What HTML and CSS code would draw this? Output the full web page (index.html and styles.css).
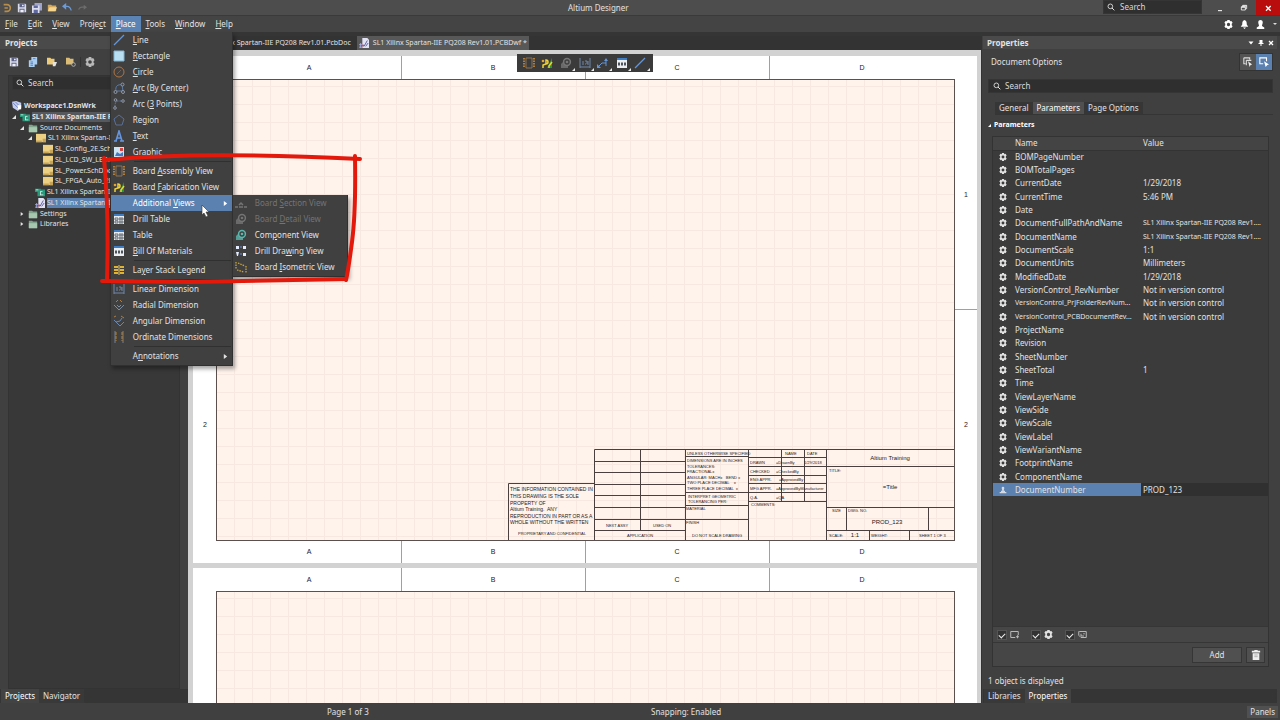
FILE: index.html
```html
<!DOCTYPE html>
<html lang="en">

<head>
    <meta charset="UTF-8">
    <meta name="viewport" content="width=device-width, initial-scale=1.0">
    <title>Altium Designer</title>
    <link rel="stylesheet" href="styles.css">
</head>

<body>
    <!-- shared icons -->
    <svg class="icon_defs" aria-hidden="true">
        <symbol id="i_gear" viewBox="0 0 12 12">
            <path fill="currentColor" fill-rule="evenodd" d="M4.5 0h3L8 1.8l1.8-.5 1.7 2.5L10.3 5v2l1.2 1.2-1.7 2.5-1.8-.5-.5 1.8h-3L4 10.2l-1.8.5L.5 8.2 1.7 7V5L.5 3.8l1.7-2.5 1.8.5zM6 3.8a2.2 2.2 0 1 0 0 4.4a2.2 2.2 0 1 0 0-4.4z" />
        </symbol>
        <symbol id="i_search" viewBox="0 0 12 12">
            <circle cx="5" cy="5" r="3.5" fill="none" stroke="currentColor" stroke-width="1.3" />
            <path d="M7.5 7.5L11 11" stroke="currentColor" stroke-width="1.5" />
        </symbol>
        <symbol id="i_save" viewBox="0 0 12 12">
            <path fill="#d9dbe8" d="M1 1h9l1 1v9H1z" />
            <path fill="#5c6186" d="M3 1h6v4H3zM3 7h6v4H3z" />
            <path fill="#eeeef6" d="M4 8h4v3H4zM6 2h2v2H6z" />
        </symbol>
        <symbol id="i_folder" viewBox="0 0 12 12">
            <path fill="#d3a85b" d="M1 2h4l1 1h5v7H1z" />
            <path fill="#f5d58e" d="M1 10l2-5h9l-2 5z" />
        </symbol>
        <symbol id="i_group" viewBox="0 0 12 12">
            <path fill="#7ea58b" d="M1 2h4l1 1h5v8H1z" />
            <path fill="#a5c8ae" d="M1 5h10v6H1z" />
        </symbol>
        <symbol id="i_sch" viewBox="0 0 12 12">
            <path fill="#edd083" d="M0 1h12v10H0z" />
            <path fill="#c7a457" d="M0 9h7v2H0zM8 7h4v4H8z" />
        </symbol>
        <symbol id="i_pcb" viewBox="0 0 12 12">
            <path fill="#2b9a7c" d="M0 2h7v4H0zM3 3h9v8H3z" />
            <path fill="#d9f5eb" d="M6 5h3v1H7v3h3v1H6zM1 3h3v1H1z" />
        </symbol>
        <symbol id="i_dwf" viewBox="0 0 12 12">
            <path fill="#e3e3f5" d="M4 0h6l2 2v10H4z" />
            <path d="M6 10l4-7M8 10l3-4" stroke="#62639c" stroke-width="1.2" />
            <path d="M0 8h4M0 11h4M2 6v6" stroke="#a7b3ef" />
            <path fill="#c34f6e" d="M3 8h3v2H3z" />
        </symbol>
        <symbol id="i_work" viewBox="0 0 12 12">
            <path fill="#c3cdf0" d="M0 1l5-1 6 2v6l-4 4-6-4z" />
            <path d="M1 2l8 8M4 1l6 6" stroke="#6375b6" />
            <path fill="#fff" d="M7 5h4v5H7z" />
        </symbol>
        <symbol id="i_table" viewBox="0 0 12 12">
            <path fill="#e8ebef" d="M1 1h10v10H1z" />
            <path fill="#3e7cc4" d="M1 1h10v2H1z" />
            <path d="M2 5h3v2H2zM2 8h3v2H2zM7 4v7M9 4v7M6 6h5M6 9h5" fill="none" stroke="#49505b" stroke-width=".8" />
        </symbol>
        <symbol id="i_bom" viewBox="0 0 12 12">
            <path fill="#eceff2" d="M1 1h10v10H1z" />
            <path fill="#3e7cc4" d="M1 1h10v2H1z" />
            <path d="M2 7h8" stroke="#4c535d" stroke-width="3" stroke-dasharray="2 1" />
        </symbol>
        <symbol id="i_assembly" viewBox="0 0 12 12">
            <path d="M3 1h6M3 11h6M3 1v10M9 1v10" fill="none" stroke="#8e7252" />
            <path d="M1 1v10M11 1v10" stroke="#d89038" stroke-width="1.5" stroke-dasharray="1.5 1" />
        </symbol>
        <symbol id="i_fab" viewBox="0 0 12 12">
            <path fill="#24972e" d="M6 11h5V1z" />
            <path d="M2 11V8l3-1V3a2 2 0 1 1 0 4M8 11V9l3-4" fill="none" stroke="#f1d137" stroke-width="1.5" />
            <circle cx="2" cy="4" r="1.3" fill="#e4a52d" />
        </symbol>
        <symbol id="i_line" viewBox="0 0 12 12">
            <path d="M1 11L11 1" stroke="#6496d7" stroke-width="1.3" />
        </symbol>
        <symbol id="i_detail" viewBox="0 0 12 12">
            <path fill="currentColor" d="M1 7l4-4 3 3v5H1z" opacity=".8" />
            <circle cx="7" cy="5" r="3.4" fill="#404040" stroke="currentColor" stroke-width="1.5" />
            <circle cx="7" cy="5" r="1.3" fill="currentColor" />
        </symbol>
        <symbol id="i_linear" viewBox="0 0 12 12">
            <path d="M1 1v10M11 1v10M1 10h10M4 4v4M6 7h1M6 4h2v3M9 4v4" fill="none" stroke="#7186a8" />
        </symbol>
        <symbol id="i_arrow" viewBox="0 0 6 6">
            <path fill="currentColor" d="M1 0l4 3-4 3z" />
        </symbol>
        <symbol id="i_open" viewBox="0 0 6 6">
            <path fill="currentColor" d="M6 0v6H0z" />
        </symbol>
    </svg>

    <header class="title_bar">
        <div class="quick_tools">
            <button aria-label="Altium"><svg viewBox="0 0 12 12"><path d="M2 2h4a4 4 0 0 1 0 8H3M3 6h4" fill="none" stroke="#b78d4b" stroke-width="2" /></svg></button>
            <button aria-label="Save"><svg><use href="#i_save" /></svg></button>
            <button aria-label="Save all"><svg viewBox="0 0 12 12"><path fill="#9ea4cb" d="M3 0h9v9H3z" /><path fill="#dcdef0" d="M0 3h9v9H0z" /><path fill="#6068a0" d="M2 3h5v3H2zM2 8h5v4H2z" /></svg></button>
            <button aria-label="Open"><svg><use href="#i_folder" /></svg></button>
            <button aria-label="Undo"><svg viewBox="0 0 12 12"><path d="M2 4h4q4 0 5 5" fill="none" stroke="#6e9bd5" stroke-width="1.5" /><path fill="#6e9bd5" d="M0 4l5-4v8z" /></svg></button>
            <button aria-label="Redo"><svg viewBox="0 0 12 12"><path d="M10 5H6q-3 0-4 3" fill="none" stroke="#6c6c6c" stroke-width="1.5" /><path fill="#6c6c6c" d="M12 5L8 2v6z" /></svg></button>
        </div>
        <h1 class="app_title">Altium Designer</h1>
        <div class="title_right">
            <label class="search title_search"><svg><use href="#i_search" /></svg><input type="text" placeholder="Search" aria-label="Search"></label>
            <div class="window_buttons">
                <button aria-label="Minimize"><svg viewBox="0 0 12 12"><path d="M3 10h6" stroke="#fff" stroke-width="1.5" /></svg></button>
                <button aria-label="Restore"><svg viewBox="0 0 12 12"><path d="M4 4V2h6v5H8M2 4h6v5H2zM2 5h6M4 3h6" fill="none" stroke="#fff" stroke-width="1.2" /></svg></button>
                <button class="close" aria-label="Close"><svg viewBox="0 0 12 12"><path d="M3 3l7 7M10 3l-7 7" stroke="#fff" stroke-width="2" /></svg></button>
            </div>
        </div>
    </header>

    <nav class="menu_bar">
        <button><u>F</u>ile</button>
        <button><u>E</u>dit</button>
        <button><u>V</u>iew</button>
        <button>Proje<u>c</u>t</button>
        <div class="menu_holder">
            <button class="open"><u>P</u>lace</button>
            <div class="menu">
                <button><svg><use href="#i_line" /></svg><span><u>L</u>ine</span></button>
                <button><svg viewBox="0 0 12 12"><path fill="#b9e0f2" stroke="#84b5d5" d="M1 1h10v10H1z" /></svg><span><u>R</u>ectangle</span></button>
                <button><svg viewBox="0 0 12 12"><circle cx="6" cy="6" r="5" fill="none" stroke="#b17544" /><path d="M4 8l4-4" stroke="#6c6259" /></svg><span><u>C</u>ircle</span></button>
                <button><svg viewBox="0 0 12 12"><path d="M3 9c-1-5 2-7 6-6l1 6H4" fill="none" stroke="#5d7ca8" /><g fill="#404040" stroke="#a0aabb" stroke-width=".8"><circle cx="2.5" cy="10" r="1.5" /><circle cx="10" cy="10" r="1.5" /><circle cx="9.5" cy="2.5" r="1.5" /></g></svg><span><u>A</u>rc (By Center)</span></button>
                <button><svg viewBox="0 0 12 12"><path d="M2 9c0-3 0-4 2-6h5" fill="none" stroke="#5d7ca8" stroke-dasharray="2 1" /><g fill="#404040" stroke="#a0aabb" stroke-width=".8"><circle cx="2" cy="10" r="1.3" /><circle cx="2.5" cy="2" r="1.3" /><circle cx="10" cy="3" r="1.3" /></g></svg><span>Arc (<u>3</u> Points)</span></button>
                <button><svg viewBox="0 0 12 12"><path d="M6 1l5 4-2 6H3L1 5z" fill="none" stroke="#596f99" /></svg><span>Re<u>g</u>ion</span></button>
                <button><svg viewBox="0 0 12 12"><path d="M1 11h3M7 11h4M3 11L6 1l3 10M4 8h4" fill="none" stroke="#6695df" stroke-width="1.6" /></svg><span><u>T</u>ext</span></button>
                <button><svg viewBox="0 0 12 12"><path fill="#cce4f3" d="M1 1h10v10H1z" /><path fill="#4478c2" d="M2 10l2-4 3 2 3-2v4z" /><path fill="#d34343" d="M7 2h3v3H7z" /></svg><span><u>G</u>raphic</span></button>
                <hr>
                <button><svg><use href="#i_assembly" /></svg><span>Board <u>A</u>ssembly View</span></button>
                <button><svg><use href="#i_fab" /></svg><span>Board <u>F</u>abrication View</span></button>
                <div class="menu_holder">
                    <button class="hover"><svg></svg><span>Additional <u>V</u>iews</span><svg class="more"><use href="#i_arrow" /></svg></button>
                    <div class="menu sub_menu">
                        <button disabled><svg viewBox="0 0 12 12"><path d="M0 10h3M4 10h4M9 10h3M4 8l2-2 2 2" fill="none" stroke="currentColor" stroke-width="1.5" /></svg><span>Board <u>S</u>ection View</span></button>
                        <button disabled><svg><use href="#i_detail" /></svg><span>Board <u>D</u>etail View</span></button>
                        <button><svg class="teal"><use href="#i_detail" /></svg><span>Com<u>p</u>onent View</span></button>
                        <button><svg viewBox="0 0 12 12"><path fill="#e5edff" d="M1 1h3v3H1zM8 1h3v3H8zM1 7h3l-1 4H2zM8 8h3v3H8z" /><path d="M5 2h2M5 9h2" stroke="#6c8edc" /></svg><span>Drill Dra<u>w</u>ing View</span></button>
                        <button><svg viewBox="0 0 12 12"><path d="M1 1v7M3 2l7 3M11 5v7M2 9l7 2" fill="none" stroke="#c7a63c" stroke-width="1.3" stroke-dasharray="1.5 1" /></svg><span>Board <u>I</u>sometric View</span></button>
                    </div>
                </div>
                <button><svg><use href="#i_table" /></svg><span>Drill Table</span></button>
                <button><svg><use href="#i_table" /></svg><span>Table</span></button>
                <button><svg><use href="#i_bom" /></svg><span><u>B</u>ill Of Materials</span></button>
                <hr>
                <button><svg viewBox="0 0 12 12"><path d="M1 3h4M7 3h4M1 6h4M7 6h4M1 9h4M7 9h4" stroke="#dfb435" stroke-width="2" /><path d="M6 1v10" stroke="#e5ca73" /></svg><span>La<u>y</u>er Stack Legend</span></button>
                <hr>
                <button><svg><use href="#i_linear" /></svg><span>Linear Dimension</span></button>
                <button><svg viewBox="0 0 12 12"><path d="M1 6l5 5 5-5M4 6l2 2 2-2" fill="none" stroke="#7a8ca2" /><path d="M3 3l2-2M9 3L7 1" stroke="#b27e45" /></svg><span>Radial Dimension</span></button>
                <button><svg viewBox="0 0 12 12"><path d="M1 5l6 6 4-4M3 7q5 0 6-4" fill="none" stroke="#6c88af" /><path d="M1 2l2-1M8 1l3 2" stroke="#b27e45" /></svg><span>Angular Dimension</span></button>
                <button><svg viewBox="0 0 12 12"><path d="M2 0v12M10 0v12" stroke="#728198" /><path d="M3 1v9M9 1v9" stroke="#b88437" stroke-dasharray="3 1" /></svg><span>Ordinate Dimensions</span></button>
                <hr>
                <button><svg></svg><span>A<u>n</u>notations</span><svg class="more"><use href="#i_arrow" /></svg></button>
            </div>
        </div>
        <button><u>T</u>ools</button>
        <button><u>W</u>indow</button>
        <button><u>H</u>elp</button>
        <div class="user_tools">
            <button aria-label="Settings"><svg><use href="#i_gear" /></svg></button>
            <button aria-label="Notifications"><svg viewBox="0 0 12 12"><path fill="#fff" d="M6 0c3 1 3 3 3 6l2 3H1l2-3c0-3 0-5 3-6zM4 10h4l-2 2z" /></svg></button>
            <button aria-label="Account"><svg viewBox="0 0 12 12"><path fill="#fff" d="M3 3c0-4 6-4 6 0 0 2-1 3-1 5l3 2v2H1v-2l3-2c0-2-1-3-1-5z" /></svg></button>
            <svg class="tiny" viewBox="0 0 6 6"><path fill="#ddd" d="M1 2h4L3 4z" /></svg>
        </div>
    </nav>

    <main class="workspace">
        <aside class="projects">
            <h2 class="panel_title">Projects</h2>
            <div class="panel_tools">
                <button aria-label="Save"><svg><use href="#i_save" /></svg></button>
                <button aria-label="Compile"><svg viewBox="0 0 12 12"><path fill="#a9cdf1" d="M4 0h7v9H4zM1 4h7v8H1z" /><path d="M3 6h3M3 8h3M3 10h3M6 2h3" stroke="#4e75b3" /></svg></button>
                <button aria-label="Open project"><svg viewBox="0 0 12 12"><path fill="#edcb7d" d="M0 1h4l1 1h4v7H0z" /><path fill="#e3e3e3" d="M7 6h5l-2 5H7z" /></svg></button>
                <button aria-label="Project options"><svg viewBox="0 0 12 12"><path fill="#dabc76" d="M0 1h4l1 1h4v7H0z" /><circle cx="9" cy="9" r="2.2" fill="#444" stroke="#bbb" /></svg></button>
                <i></i>
                <button class="dim" aria-label="Settings"><svg><use href="#i_gear" /></svg></button>
            </div>
            <div class="projects_body">
                <label class="search"><svg><use href="#i_search" /></svg><input type="text" placeholder="Search" aria-label="Search projects"></label>
                <ul class="tree">
                    <li class="strong"><svg><use href="#i_work" /></svg>Workspace1.DsnWrk</li>
                    <li class="strong selected_soft"><svg class="twist"><use href="#i_open" /></svg><svg><use href="#i_pcb" /></svg><span>SL1 Xilinx Spartan-IIE PQ208 Rev1.01.PrjPcb</span></li>
                    <li class="level_2"><svg class="twist"><use href="#i_open" /></svg><svg><use href="#i_group" /></svg>Source Documents</li>
                    <li class="level_3"><svg class="twist"><use href="#i_open" /></svg><svg><use href="#i_sch" /></svg>SL1 Xilinx Spartan-IIE PQ208 Rev1.01.SchDoc</li>
                    <li class="level_4"><svg><use href="#i_sch" /></svg>SL_Config_2E.SchDoc</li>
                    <li class="level_4"><svg><use href="#i_sch" /></svg>SL_LCD_SW_LED.SchDoc</li>
                    <li class="level_4"><svg><use href="#i_sch" /></svg>SL_Power.SchDoc</li>
                    <li class="level_4"><svg><use href="#i_sch" /></svg>SL_FPGA_Auto_2E.SchDoc</li>
                    <li class="level_doc"><svg><use href="#i_pcb" /></svg>SL1 Xilinx Spartan-IIE PQ208 Rev1.01.PcbDoc</li>
                    <li class="level_doc selected"><svg><use href="#i_dwf" /></svg><span>SL1 Xilinx Spartan-IIE PQ208 Rev1.01.PCBDwf</span></li>
                    <li class="level_2"><svg class="twist"><use href="#i_arrow" /></svg><svg><use href="#i_group" /></svg>Settings</li>
                    <li class="level_2"><svg class="twist"><use href="#i_arrow" /></svg><svg><use href="#i_group" /></svg>Libraries</li>
                </ul>
            </div>
            <div class="panel_tabs">
                <button class="active">Projects</button>
                <button>Navigator</button>
            </div>
        </aside>

        <section class="editor">
            <div class="doc_tabs">
                <button><svg><use href="#i_pcb" /></svg>SL1 Xilinx Spartan-IIE PQ208 Rev1.01.PcbDoc</button>
                <button class="active"><svg><use href="#i_dwf" /></svg>SL1 Xilinx Spartan-IIE PQ208 Rev1.01.PCBDwf *</button>
            </div>
            <div class="canvas">
                <div class="active_bar">
                    <button aria-label="Board assembly view"><svg><use href="#i_assembly" /></svg></button>
                    <button aria-label="Board fabrication view"><svg><use href="#i_fab" /></svg></button>
                    <button class="drop" aria-label="Additional views"><svg><use href="#i_detail" /></svg></button>
                    <button class="drop" aria-label="Dimensions"><svg><use href="#i_linear" /></svg></button>
                    <button class="drop" aria-label="Annotations"><svg viewBox="0 0 12 12"><path d="M1 10l4-4h4M9 3v6" fill="none" stroke="#6496d7" /><path fill="#6496d7" d="M0 11V7l4 4zM9 1l2 3H7z" /></svg></button>
                    <button class="drop" aria-label="Bill of materials"><svg><use href="#i_bom" /></svg></button>
                    <button class="drop" aria-label="Line"><svg><use href="#i_line" /></svg></button>
                </div>

                <svg class="sheet" viewBox="0 0 784 507">
                    <defs>
                        <pattern id="grid" width="18" height="18" patternUnits="userSpaceOnUse" x="5" y="12">
                            <path d="M0 .5h18M.5 0v18" stroke="#f7e9e2" />
                        </pattern>
                        <g id="zones">
                            <rect width="784" height="507" fill="#fff" />
                            <rect x="23.5" y="23.5" width="738" height="461" fill="#fff3ec" />
                            <rect x="23.5" y="23.5" width="738" height="461" fill="url(#grid)" stroke="#5b504e" />
                            <path d="M208.5 0v23M392.5 0v23M576.5 0v23M208.5 485v22M392.5 485v22M576.5 485v22M0 253.5h23M762 253.5h22" stroke="#a0a0a0" />
                            <g class="zone_text">
                                <text x="116" y="14">A</text><text x="300" y="14">B</text><text x="484" y="14">C</text><text x="669" y="14">D</text>
                            </g>
                        </g>
                    </defs>
                    <use href="#zones" />
                    <g class="zone_text">
                        <text x="116" y="498">A</text><text x="300" y="498">B</text><text x="484" y="498">C</text><text x="669" y="498">D</text>
                        <text x="12" y="141">1</text><text x="773" y="141">1</text>
                        <text x="12" y="371">2</text><text x="773" y="371">2</text>
                    </g>
                    <!-- title block -->
                    <g transform="translate(-193 -56)">
                        <g fill="none" stroke="#4a4040">
                            <path d="M508.5 540V483.5H594M594.5 540V449.5H954M640.5 449v81M685.5 449v91M594 461.5h91M594 472.5h91M594 484.5h91M594 495.5h91M594 507.5h91M594 519.5h91M594 530.5h91" />
                            <path d="M748.5 449v91M686 456.5h62M686 492.5h62M686 505.5h62M686 519.5h62" />
                            <path d="M826.5 449v91M781.5 449v53M804.5 449v53M749 457.5h78M749 466.5h78M749 475.5h78M749 483.5h78M749 492.5h78M749 501.5h78" />
                            <path d="M827 466.5h127M827 507.5h127M827 530.5h127M846.5 507v23M928.5 507v23M869.5 530v10M909.5 530v10" />
                        </g>
                        <g class="note_text">
                            <text x="510" y="491">THE INFORMATION CONTAINED IN</text>
                            <text x="510" y="498">THIS DRAWING IS THE SOLE</text>
                            <text x="510" y="505">PROPERTY OF</text>
                            <text x="510" y="511">Altium Training.  ANY</text>
                            <text x="510" y="518">REPRODUCTION IN PART OR AS A</text>
                            <text x="510" y="524">WHOLE WITHOUT THE WRITTEN</text>
                        </g>
                        <g class="small_text">
                            <text x="518" y="535">PROPRIETARY AND CONFIDENTIAL</text>
                            <text x="606" y="527">NEXT ASSY</text><text x="653" y="527">USED ON</text><text x="627" y="537">APPLICATION</text>
                            <text x="687" y="455">UNLESS OTHERWISE SPECIFIED</text>
                            <text x="687" y="462">DIMENSIONS ARE IN INCHES</text>
                            <text x="687" y="468">TOLERANCES:</text>
                            <text x="687" y="473">FRACTIONAL±</text>
                            <text x="687" y="479">ANGULAR: MACH±   BEND ±</text>
                            <text x="687" y="484">TWO PLACE DECIMAL    ±</text>
                            <text x="687" y="490">THREE PLACE DECIMAL  ±</text>
                            <text x="688" y="498">INTERPRET GEOMETRIC</text><text x="688" y="503">TOLERANCING PER:</text>
                            <text x="686" y="510">MATERIAL</text><text x="686" y="524">FINISH</text>
                            <text x="692" y="537">DO NOT SCALE DRAWING</text>
                            <text x="785" y="455">NAME</text><text x="807" y="455">DATE</text>
                            <text x="750" y="464">DRAWN</text><text x="776" y="464">=DrawnBy</text><text x="804" y="464">1/29/2018</text>
                            <text x="750" y="473">CHECKED</text><text x="776" y="473">=CheckedBy</text>
                            <text x="750" y="481">ENG APPR.</text><text x="779" y="481">=ApprovedBy</text>
                            <text x="750" y="490">MFG APPR.</text><text x="776" y="490">=ApprovedByManufacturer</text>
                            <text x="750" y="499">Q.A.</text><text x="776" y="499">=QA</text>
                            <text x="751" y="506">COMMENTS:</text>
                            <text x="829" y="472">TITLE:</text><text x="832" y="512">SIZE</text><text x="848" y="512">DWG. NO.</text>
                            <text x="829" y="537">SCALE:</text><text x="871" y="537">WEIGHT:</text><text x="919" y="537">SHEET 1 OF 3</text>
                        </g>
                        <g class="block_text">
                            <text x="890" y="460">Altium Training</text>
                            <text x="890" y="489">=Title</text>
                            <text x="887" y="524">PROD_123</text>
                            <text x="855" y="537">1:1</text>
                        </g>
                    </g>
                </svg>
                <svg class="sheet" viewBox="0 0 784 507">
                    <use href="#zones" />
                </svg>
            </div>
        </section>

        <aside class="properties">
            <div class="panel_title">
                <h2>Properties</h2>
                <button aria-label="Panel menu"><svg viewBox="0 0 12 12"><path fill="#fff" d="M1 3h10L6 9z" /></svg></button>
                <button aria-label="Pin"><svg viewBox="0 0 12 12"><path fill="#fff" d="M3 0h6v6h2v2H1V6h2zM5 8h2v4H5z" /></svg></button>
                <button aria-label="Close panel"><svg viewBox="0 0 12 12"><path d="M2 2l8 8M10 2l-8 8" stroke="#fff" stroke-width="2.5" /></svg></button>
            </div>
            <div class="properties_body">
                <div class="object_row">
                    <span>Document Options</span>
                    <div class="mode_buttons">
                        <button aria-label="Select all"><svg viewBox="0 0 12 12"><path d="M1 1h7v2M1 1v7h2M4 4h6M4 4v6" fill="none" stroke="#ddd" stroke-width="1.3" /><path fill="#eee" d="M6 5l5 4-2 .5L8 12z" /></svg></button>
                        <button class="on" aria-label="Select single"><svg viewBox="0 0 12 12"><path d="M5 8H1V1h8v4" fill="none" stroke="#fff" stroke-width="1.3" /><path fill="#fff" d="M6 5l6 4-2 .5L8 12z" /></svg></button>
                    </div>
                </div>
                <label class="search"><svg><use href="#i_search" /></svg><input type="text" placeholder="Search" aria-label="Search properties"></label>
                <div class="prop_tabs">
                    <button>General</button>
                    <button class="active">Parameters</button>
                    <button>Page Options</button>
                </div>
                <h3 class="section_title"><svg><use href="#i_open" /></svg>Parameters</h3>
                <div class="param_box">
                    <div class="param_scroll">
                        <table class="params">
                            <thead>
                                <tr><th></th><th>Name</th><th>Value</th></tr>
                            </thead>
                            <tbody>
                                <tr><td><svg><use href="#i_gear" /></svg></td><td>BOMPageNumber</td><td></td></tr>
                                <tr><td><svg><use href="#i_gear" /></svg></td><td>BOMTotalPages</td><td></td></tr>
                                <tr><td><svg><use href="#i_gear" /></svg></td><td>CurrentDate</td><td>1/29/2018</td></tr>
                                <tr><td><svg><use href="#i_gear" /></svg></td><td>CurrentTime</td><td>5:46 PM</td></tr>
                                <tr><td><svg><use href="#i_gear" /></svg></td><td>Date</td><td></td></tr>
                                <tr><td><svg><use href="#i_gear" /></svg></td><td>DocumentFullPathAndName</td><td class="long">SL1 Xilinx Spartan-IIE PQ208 Rev1....</td></tr>
                                <tr><td><svg><use href="#i_gear" /></svg></td><td>DocumentName</td><td class="long">SL1 Xilinx Spartan-IIE PQ208 Rev1....</td></tr>
                                <tr><td><svg><use href="#i_gear" /></svg></td><td>DocumentScale</td><td>1:1</td></tr>
                                <tr><td><svg><use href="#i_gear" /></svg></td><td>DocumentUnits</td><td>Millimeters</td></tr>
                                <tr><td><svg><use href="#i_gear" /></svg></td><td>ModifiedDate</td><td>1/29/2018</td></tr>
                                <tr><td><svg><use href="#i_gear" /></svg></td><td>VersionControl_RevNumber</td><td>Not in version control</td></tr>
                                <tr><td><svg><use href="#i_gear" /></svg></td><td class="long">VersionControl_PrjFolderRevNum...</td><td>Not in version control</td></tr>
                                <tr><td><svg><use href="#i_gear" /></svg></td><td class="long">VersionControl_PCBDocumentRev...</td><td>Not in version control</td></tr>
                                <tr><td><svg><use href="#i_gear" /></svg></td><td>ProjectName</td><td></td></tr>
                                <tr><td><svg><use href="#i_gear" /></svg></td><td>Revision</td><td></td></tr>
                                <tr><td><svg><use href="#i_gear" /></svg></td><td>SheetNumber</td><td></td></tr>
                                <tr><td><svg><use href="#i_gear" /></svg></td><td>SheetTotal</td><td>1</td></tr>
                                <tr><td><svg><use href="#i_gear" /></svg></td><td>Time</td><td></td></tr>
                                <tr><td><svg><use href="#i_gear" /></svg></td><td>ViewLayerName</td><td></td></tr>
                                <tr><td><svg><use href="#i_gear" /></svg></td><td>ViewSide</td><td></td></tr>
                                <tr><td><svg><use href="#i_gear" /></svg></td><td>ViewScale</td><td></td></tr>
                                <tr><td><svg><use href="#i_gear" /></svg></td><td>ViewLabel</td><td></td></tr>
                                <tr><td><svg><use href="#i_gear" /></svg></td><td>ViewVariantName</td><td></td></tr>
                                <tr><td><svg><use href="#i_gear" /></svg></td><td>FootprintName</td><td></td></tr>
                                <tr><td><svg><use href="#i_gear" /></svg></td><td>ComponentName</td><td></td></tr>
                                <tr class="current"><td><svg viewBox="0 0 12 12"><path fill="#d5dae2" d="M4 3a2 2 0 1 1 4 0L7 7h2v2h2v2H1V9h2V7h2z" /></svg></td><td>DocumentNumber</td><td>PROD_123</td></tr>
                            </tbody>
                        </table>
                    </div>
                    <div class="filters">
                        <label><input type="checkbox" checked aria-label="Show document parameters"><svg viewBox="0 0 12 12"><path d="M1 2h10v5M1 2v8h6M8 9h4M10 7v4" fill="none" stroke="#bbb" stroke-width="1.3" /></svg></label>
                        <label><input type="checkbox" checked aria-label="Show system parameters"><svg><use href="#i_gear" /></svg></label>
                        <label><input type="checkbox" checked aria-label="Show project parameters"><svg viewBox="0 0 12 12"><path d="M2 2h9v8H4L1 7V2zM4 5v3h4M7 5h2" fill="none" stroke="#bbb" stroke-width="1.3" /></svg></label>
                    </div>
                    <div class="actions">
                        <button class="add">Add</button>
                        <button class="trash" aria-label="Delete"><svg viewBox="0 0 12 12"><path fill="#eee" d="M4 0h4v1h3v2H1V1h3zM2 4h8v8H2z" /><path d="M4 6h4M4 8h4" stroke="#888" stroke-width=".7" /></svg></button>
                    </div>
                </div>
                <p class="count">1 object is displayed</p>
            </div>
            <div class="panel_tabs">
                <button>Libraries</button>
                <button class="active">Properties</button>
            </div>
        </aside>
    </main>

    <footer class="status_bar">
        <span>Page 1 of 3</span>
        <span>Snapping: Enabled</span>
        <button>Panels</button>
    </footer>

    <!-- red marker around the view commands -->
    <svg class="marker" viewBox="0 0 264 136" aria-hidden="true">
        <g fill="none" stroke="#e3190c" stroke-width="4" stroke-linecap="round">
            <path d="M5 8Q100-1 260 7" />
            <path d="M255 4Q256 60 252 90T246 128" />
            <path d="M2 129L90 130 246 127" />
            <path d="M4 6Q9 60 7 128" />
        </g>
    </svg>
    <svg class="cursor" viewBox="0 0 10 14" aria-hidden="true">
        <path d="M1 1v10l2-2 2 4 2-1-2-4h3z" fill="#fff" stroke="#333" stroke-width=".6" />
    </svg>
</body>

</html>
```
FILE: styles.css
```css
* {
    box-sizing: border-box;
}

body {
    position: relative;
    display: flex;
    flex-direction: column;
    height: 100vh;
    margin: 0;
    overflow: hidden;
    background-color: #404040;
    color: #e2e2e2;
    font-family: "Noto Sans", sans-serif;
    font-size: 8px;
    line-height: 10px;
}

button,
input {
    margin: 0;
    padding: 0;
    border: 0;
    background: none;
    color: inherit;
    font: inherit;
}

button {
    white-space: nowrap;
}

h1, h2, h3, p, ul {
    margin: 0;
    padding: 0;
    font-size: 8px;
}

svg {
    display: block;
    flex: none;
    width: 10px;
    height: 10px;
}

u {
    text-underline-offset: 1px;
}

.icon_defs {
    position: absolute;
    width: 0;
    height: 0;
}

/* title bar */
.title_bar {
    display: grid;
    grid-template-columns: 568px 1fr auto;
    align-items: center;
    height: 16px;
    flex: none;
    background-color: #4d4d4d;
    border-bottom: 1px solid #3a3a3a;
}

.quick_tools {
    display: flex;
    gap: 5px;
    padding-left: 2px;
}

.app_title {
    font-weight: normal;
}

.title_right {
    display: flex;
    justify-content: flex-end;
    height: 15px;
}

.search {
    display: flex;
    align-items: center;
    gap: 6px;
    height: 14px;
    padding: 0 5px;
    background-color: #2f2f2f;
    border: 1px solid #353535;
}

.search svg {
    width: 8px;
    height: 8px;
}

.search input {
    flex: 1;
    min-width: 0;
    outline: 0;
}

.search input::placeholder {
    color: #dadada;
    opacity: 1;
}

.title_search {
    gap: 5px;
    width: 99px;
    padding: 0 3px;
    margin-right: 6px;
}

.window_buttons {
    display: flex;
}

.window_buttons button {
    display: grid;
    place-items: center;
    width: 24px;
}

.window_buttons svg {
    width: 8px;
    height: 8px;
}

.window_buttons .close {
    background-color: #b90d0d;
}

/* menu bar */
.menu_bar {
    display: flex;
    height: 16px;
    flex: none;
    background-color: #444;
}

.menu_bar > button,
.menu_holder > .open {
    height: 16px;
    padding: 0 5px;
}

.menu_holder {
    position: relative;
}

.menu_holder > .open {
    background-color: #5b84b4;
    color: #fff;
}

.user_tools {
    display: flex;
    align-items: center;
    gap: 7px;
    margin-left: auto;
    padding-right: 2px;
    color: #fff;
}

.user_tools svg {
    width: 9px;
    height: 9px;
}

.user_tools .tiny {
    width: 6px;
    height: 6px;
}

/* drop down menu */
.menu {
    position: absolute;
    z-index: 5;
    top: 16px;
    left: -1px;
    width: 123px;
    padding-bottom: 1px;
    background-color: #404040;
    border: 1px solid #303030;
    border-top: 0;
    box-shadow: 2px 3px 4px rgba(0, 0, 0, .35);
}

.menu button {
    display: flex;
    align-items: center;
    gap: 8px;
    width: 100%;
    height: 16px;
    padding: 0 4px 0 2px;
    text-align: left;
}

.menu button svg {
    width: 12px;
    height: 12px;
}

.menu button span {
    flex: 1;
}

.menu hr {
    height: 1px;
    margin: 1px 1px 1px 23px;
    border: 0;
    background-color: #303030;
}

.menu .hover {
    background-color: #5b81b1;
    color: #fff;
}

.menu button .more {
    width: 5px;
    height: 5px;
}

.sub_menu {
    top: 0;
    left: 121px;
    width: 116px;
}

.sub_menu button:disabled {
    color: #747474;
}

.sub_menu .teal {
    color: #5bb7ad;
}

/* three columns */
.workspace {
    display: flex;
    flex: 1;
    min-height: 0;
    padding-top: 4px;
    background-color: #353535;
}

.projects {
    display: flex;
    flex-direction: column;
    width: 188px;
    flex: none;
    background-color: #404040;
}

.panel_title {
    display: flex;
    align-items: center;
    gap: 4px;
    height: 13px;
    flex: none;
    padding: 0 5px;
    background-color: #4a4a4a;
    font-weight: bold;
}

.panel_title h2 {
    flex: 1;
}

.panel_title svg {
    width: 6px;
    height: 6px;
}

.panel_tools {
    display: flex;
    align-items: center;
    gap: 9px;
    height: 26px;
    flex: none;
    padding-left: 9px;
}

.panel_tools i {
    width: 1px;
    height: 10px;
    margin: 0 -5px;
    background-color: #333;
}

.panel_tools .dim {
    color: #b9b9b9;
}

.projects_body {
    flex: 1;
    min-height: 0;
    margin: 0 8px;
    background-color: #383838;
    border: 1px solid #333;
    overflow: hidden;
}

.projects_body .search {
    gap: 4px;
    margin: 0 3px;
    padding: 0 3px;
}

.tree {
    margin-top: 10px;
    padding-left: 3px;
    font-size: 7px;
    list-style: none;
}

.tree li {
    display: flex;
    align-items: center;
    gap: 2px;
    height: 11px;
    white-space: nowrap;
}

.tree li:nth-child(4n) {
    height: 10px;
}

.tree .twist {
    width: 4px;
    height: 4px;
    margin-right: 2px;
}

.tree .strong {
    font-weight: bold;
}

.tree .level_2 {
    padding-left: 8px;
}

.tree .level_3 {
    padding-left: 16px;
}

.tree .level_4 {
    padding-left: 31px;
}

.tree .level_doc {
    padding-left: 23px;
}

.selected_soft span {
    background-color: #55595e;
}

.selected span {
    background-color: #5b81b1;
}

.panel_tabs {
    display: flex;
    height: 14px;
    flex: none;
    padding-left: 1px;
    background-color: #353535;
}

.panel_tabs button {
    padding: 0 4px;
    background-color: #393939;
}

.panel_tabs .active {
    background-color: #434343;
    color: #fff;
}

/* drawing editor */
.editor {
    display: flex;
    flex-direction: column;
    flex: 1;
    min-width: 0;
}

.doc_tabs {
    display: flex;
    gap: 4px;
    height: 14px;
    flex: none;
    background-color: #333;
    font-size: 7px;
}

.doc_tabs button {
    display: flex;
    align-items: center;
    gap: 4px;
    padding: 0 2px;
}

.doc_tabs .active {
    background-color: #585858;
}

.canvas {
    position: relative;
    display: flex;
    flex-direction: column;
    gap: 5px;
    flex: 1;
    min-height: 0;
    padding: 6px 4px 0 5px;
    overflow: hidden;
    background-color: #d2d2d2;
}

.sheet {
    width: 100%;
    height: auto;
}

.sheet text {
    fill: #262020;
    font-family: "Liberation Sans", sans-serif;
    white-space: pre;
}

.zone_text {
    font-size: 7px;
    text-anchor: middle;
}

.note_text {
    font-size: 5px;
}

.small_text {
    font-size: 4px;
}

.block_text {
    font-size: 6px;
    text-anchor: middle;
}

.active_bar {
    position: absolute;
    top: 4px;
    left: 50%;
    display: flex;
    width: 136px;
    height: 18px;
    margin-left: -68px;
    padding: 0 3px;
    background-color: #3b3b3b;
    color: #777;
}

.active_bar svg {
    width: 12px;
    height: 12px;
}

.active_bar button {
    position: relative;
    display: grid;
    place-items: center;
    flex: 1;
}

.active_bar .drop::after {
    content: "";
    position: absolute;
    right: 0;
    bottom: 1px;
    border-bottom: 3px solid #eee;
    border-left: 3px solid transparent;
}

/* properties panel */
.properties {
    display: flex;
    flex-direction: column;
    width: 299px;
    flex: none;
    padding: 0 3px 0 1px;
    background-color: #404040;
    border-left: 1px solid #333;
}

.properties .panel_title {
    padding-right: 3px;
    padding-left: 4px;
}

.properties_body {
    display: flex;
    flex-direction: column;
    flex: 1;
    min-height: 0;
    padding: 4px 4px 0 5px;
}

.object_row {
    display: flex;
    align-items: center;
    justify-content: space-between;
    height: 18px;
    padding-left: 3px;
}

.mode_buttons {
    display: flex;
    border: 1px solid #333;
}

.mode_buttons button {
    display: grid;
    place-items: center;
    width: 16px;
    height: 16px;
    background-color: #545454;
}

.mode_buttons .on {
    background-color: #5b81b1;
}

.properties_body .search {
    gap: 4px;
    margin-top: 8px;
    padding-left: 4px;
}

.prop_tabs {
    display: flex;
    margin: 9px 0 0 7px;
    border-bottom: 1px solid #353535;
}

.prop_tabs button {
    height: 12px;
    padding: 0 4px;
    background-color: #363636;
}

.prop_tabs .active {
    background-color: #505050;
    color: #fff;
}

.section_title {
    display: flex;
    align-items: center;
    gap: 3px;
    margin: 5px 0 6px;
    color: #fff;
    font-size: 7px;
}

.section_title svg {
    width: 3px;
    height: 3px;
}

.param_box {
    display: flex;
    flex-direction: column;
    flex: 1;
    min-height: 0;
    margin: 0 4px;
    background-color: #464646;
    border: 1px solid #333;
}

.param_scroll {
    flex: 1;
    min-height: 0;
    overflow: hidden;
    background-color: #3b3b3b;
}

.params {
    width: 100%;
    table-layout: fixed;
    border-collapse: collapse;
}

.params th {
    height: 13px;
    padding: 0 3px 0 2px;
    background-color: #444;
    border-bottom: 1px solid #333;
    font-weight: normal;
    text-align: left;
}

.params th:first-child {
    width: 20px;
}

.params th:nth-child(2) {
    width: 128px;
}

.params td {
    height: 13px;
    padding: 0 3px 0 2px;
    white-space: nowrap;
}

.params td:first-child {
    padding-left: 6px;
}

.params tr:nth-child(3n) td {
    height: 14px;
}

.params .long {
    font-size: 7px;
}

.params td svg {
    width: 8px;
    height: 8px;
}

.params .current td {
    background-color: #5b81b1;
}

.params .current td:last-child {
    background-color: #303030;
}

.filters {
    display: flex;
    align-items: center;
    gap: 12px;
    height: 17px;
    padding-left: 4px;
    border: 1px solid #363636;
    border-width: 1px 0;
}

.filters label {
    display: flex;
    align-items: center;
    gap: 3px;
}

.filters svg {
    width: 9px;
    height: 9px;
}

.filters input {
    appearance: none;
    display: grid;
    place-items: center;
    width: 10px;
    height: 10px;
    background-color: #333;
    border: 1px solid #555;
}

.filters input:checked::before {
    content: "";
    width: 5px;
    height: 3px;
    border: solid #eee;
    border-width: 0 0 1px 1px;
    transform: rotate(-45deg);
}

.actions {
    display: flex;
    justify-content: flex-end;
    gap: 4px;
    padding: 4px 3px 3px 0;
}

.actions button {
    display: grid;
    place-items: center;
    height: 16px;
    background-color: #505050;
    border: 1px solid #363636;
}

.actions .add {
    width: 50px;
}

.actions .trash {
    width: 19px;
}

.count {
    padding: 9px 0 3px;
}

/* status bar */
.status_bar {
    display: grid;
    grid-template-columns: 324px 1fr auto;
    align-items: center;
    height: 17px;
    flex: none;
    padding: 1px 2px 0 327px;
    background-color: #404040;
}

.status_bar button {
    height: 12px;
    padding: 0 3px;
    background-color: #505050;
}

/* overlays */
.marker {
    position: absolute;
    z-index: 6;
    top: 152px;
    left: 100px;
    width: 264px;
    height: 136px;
}

.cursor {
    position: absolute;
    z-index: 7;
    top: 204px;
    left: 201px;
    width: 10px;
    height: 14px;
}
```
